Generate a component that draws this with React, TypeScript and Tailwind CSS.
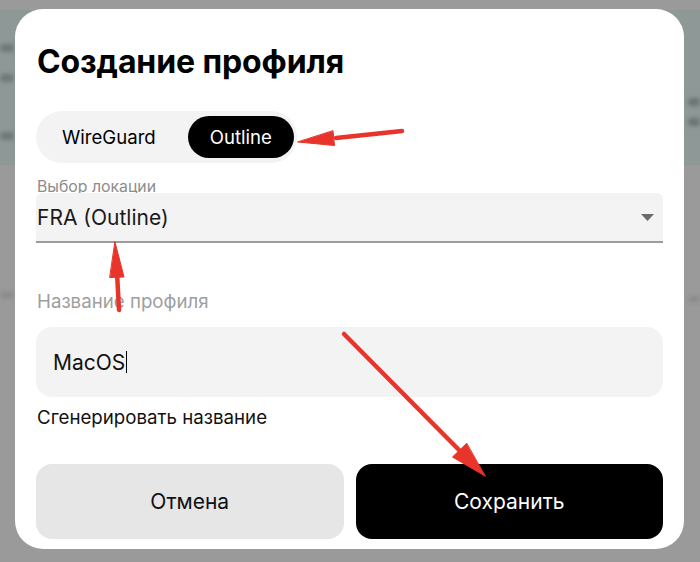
import { useState } from "react";

const font = { fontFamily: "Inter, 'Noto Sans', sans-serif" };

// red annotation arrows drawn over the screenshot
const Arrows = () => (
  <svg
    className="absolute inset-0 pointer-events-none"
    width={700}
    height={562}
    viewBox="0 0 700 562"
  >
    <g fill="#e8342a" stroke="#e8342a" strokeLinecap="round">
      <line x1="402" y1="131" x2="336" y2="138" strokeWidth="4.5" />
      <polygon points="298,142 334.5,145.5 333,131" strokeWidth="1" />
      <line x1="119" y1="310" x2="117" y2="272" strokeWidth="4.5" />
      <polygon points="115,242 124,277 110,277.5" strokeWidth="1" />
      <line x1="344" y1="334" x2="462" y2="453" strokeWidth="4.5" />
      <polygon points="485,476 452.5,457 466.5,443.5" strokeWidth="1" />
    </g>
  </svg>
);

export default function App() {
  const [proto, setProto] = useState("Outline");
  const [name, setName] = useState("MacOS");

  return (
    <div
      className="relative w-[700px] h-[562px] overflow-hidden bg-[#9a9a9a] pt-[9px] pl-[15px]"
      style={font}
    >
      {/* Blurred page behind the modal */}
      <div className="absolute left-0 right-0 top-[10px] h-[155px] bg-[#8e9897]">
        <div className="absolute left-0 top-[34px] w-[14px] h-[8px] rounded bg-[#6f7877] blur-[2px]" />
        <div className="absolute left-0 top-[64px] w-[14px] h-[8px] rounded bg-[#6f7877] blur-[2px]" />
        <div className="absolute left-0 top-[122px] w-[14px] h-[8px] rounded bg-[#6f7877] blur-[2px]" />
        <div className="absolute right-0 top-[88px] w-[12px] h-[8px] rounded bg-[#6a7372] blur-[2px]" />
        <div className="absolute right-0 top-[108px] w-[12px] h-[8px] rounded bg-[#6a7372] blur-[2px]" />
      </div>
      <div className="absolute left-0 top-[292px] w-[14px] h-[6px] rounded bg-[#8a8a8a] blur-[2px]" />
      <div className="absolute right-0 top-[296px] w-[12px] h-[6px] rounded bg-[#8a8a8a] blur-[2px]" />

      {/* Modal */}
      <div className="relative w-[669px] h-[540px] rounded-[28px] bg-white px-[21px] pt-[37px] flex flex-col">
        <h1 className="text-[32px] leading-[32px] font-bold text-black tracking-[-0.1px] pl-[1px]">
          Создание профиля
        </h1>

        <div className="mt-[33px] self-start flex items-center gap-[10px] rounded-full bg-[#f3f3f3] py-[5px] pl-[4px] pr-[3px]">
          {["WireGuard", "Outline"].map((p) => (
            <button
              key={p}
              onClick={() => setProto(p)}
              className={`h-[42px] rounded-full px-[22px] text-[18.6px] leading-none ${
                proto === p ? "bg-black text-white" : "text-black"
              }`}
            >
              {p}
            </button>
          ))}
        </div>

        <label className="mt-[16px] pl-[1px] text-[15.8px] leading-[15px] text-[#8c8c8c]">
          Выбор локации
        </label>
        <div className="mt-[-1px] h-[50px] flex items-center justify-between rounded-t-[6px] border-b-2 border-[#9c9c9c] bg-[#f3f3f3] pl-[1px] pr-[9px]">
          <span className="text-[21px] leading-none text-[#1a1a1a]">FRA (Outline)</span>
          <svg width="13" height="7" viewBox="0 0 13 7">
            <path d="M0 0h13L6.5 7z" fill="#6b6b6b" />
          </svg>
        </div>

        <label className="mt-[50px] pl-[1px] text-[18.7px] leading-[18px] text-[#9e9e9e]">
          Название профиля
        </label>
        <div className="mt-[16px] h-[70px] flex items-center rounded-[16px] bg-[#f3f3f3] px-[17px]">
          <span className="text-[21px] leading-none text-[#111]">{name}</span>
          <span className="ml-[1px] w-[1px] h-[22px] bg-black" />
        </div>

        <button
          onClick={() => setName("MacOS")}
          className="mt-[12px] self-start pl-[1px] text-[18.7px] leading-[18px] text-[#111]"
        >
          Сгенерировать название
        </button>

        <div className="mt-[37px] grid grid-cols-2 gap-[12px]">
          <button className="h-[75px] rounded-[16px] bg-[#e6e6e6] text-[21px] text-[#111]">
            Отмена
          </button>
          <button className="h-[75px] rounded-[16px] bg-black text-[21px] text-white">
            Сохранить
          </button>
        </div>
      </div>

      <Arrows />
    </div>
  );
}
